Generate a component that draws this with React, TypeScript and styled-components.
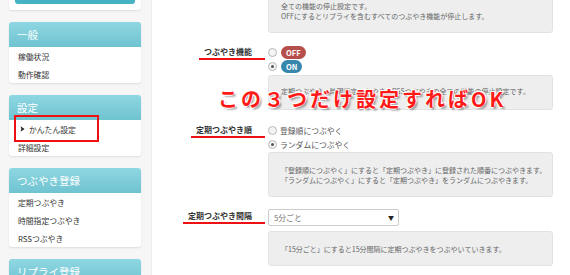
import React from "react";
import styled, { createGlobalStyle, css } from "styled-components";

const GlobalStyle = createGlobalStyle`
  html, body {
    margin: 0;
    padding: 0;
    background: #ffffff;
    font-family: "Noto Sans CJK JP", "Noto Sans", sans-serif;
  }
  #root {
    width: 570px;
    height: 275px;
    overflow: hidden;
  }
`;

const Page = styled.div`
  display: flex;
  width: 570px;
  height: 275px;
  overflow: hidden;
`;

const Sidebar = styled.aside`
  width: 152px;
  flex-shrink: 0;
  background: #f6f6f6;
  border-right: 1px solid #ececec;
  display: flex;
  flex-direction: column;
  gap: 12px;
  padding-left: 9px;
  box-sizing: border-box;
`;

const Card = styled.div`
  width: 132px;
  background: #ffffff;
  border-radius: 3px;
  box-shadow: 0 1px 2px rgba(0, 0, 0, 0.1);
  flex-shrink: 0;
`;

const TopCard = styled(Card)`
  padding: 0 6px 6px;
  box-sizing: border-box;
`;

const TopButton = styled.div`
  height: 4px;
  background: #45b3c4;
  border-radius: 0 0 3px 3px;
`;

const CardHeader = styled.div`
  height: 25px;
  line-height: 25px;
  padding-left: 8px;
  color: #ffffff;
  font-size: 10.5px;
  background: linear-gradient(#8ed7e2, #6fc3d0);
  border-radius: 3px 3px 0 0;
`;

const NavItem = styled.div<{ $active?: boolean }>`
  position: relative;
  display: flex;
  align-items: center;
  height: 18px;
  padding-left: 9px;
  font-size: 7.8px;
  color: #333333;
  ${(p) =>
    p.$active &&
    css`
      &::after {
        content: "";
        position: absolute;
        left: 5px;
        top: -5px;
        width: 85px;
        height: 27px;
        border: 2px solid #ee1111;
        box-sizing: border-box;
      }
    `}
`;

const Chevron = styled.svg`
  width: 5px;
  height: 6px;
  margin: 0 4px 0 2px;
`;

const Main = styled.main`
  position: relative;
  flex: 1;
  padding-right: 16px;
`;

const Section = styled.div<{ $gap: number }>`
  margin-top: ${(p) => p.$gap}px;
  display: grid;
  grid-template-columns: 113px 285px;
  column-gap: 3px;
`;

const Note = styled.div<{ $top: number; $bottom: number; $space?: number }>`
  grid-column: 2;
  margin-top: ${(p) => p.$space ?? 0}px;
  padding: ${(p) => p.$top}px 12px ${(p) => p.$bottom}px;
  background: #eeeeee;
  border: 1px solid #e2e2e2;
  border-radius: 3px;
  color: #666666;
  font-size: 7px;
  line-height: 10px;
  white-space: nowrap;
`;

const LabelCell = styled.div`
  display: flex;
  justify-content: flex-end;
  align-items: flex-start;
`;

const Label = styled.span<{ $offset: number }>`
  margin-top: ${(p) => p.$offset}px;
  height: 12px;
  line-height: 12px;
  padding: 0 13px 0 5px;
  border-bottom: 2px solid #ee1111;
  font-size: 8px;
  font-weight: bold;
  color: #333333;
  white-space: nowrap;
`;

const Options = styled.div`
  display: flex;
  flex-direction: column;
`;

const Option = styled.label`
  display: flex;
  align-items: center;
  height: 14px;
  gap: 3px;
  font-size: 7.8px;
  color: #555555;
`;

const Radio = styled.span<{ $checked?: boolean }>`
  width: 7px;
  height: 7px;
  border-radius: 50%;
  border: 1px solid #b8b8b8;
  background: #f4f4f4;
  position: relative;
  ${(p) =>
    p.$checked &&
    css`
      &::after {
        content: "";
        position: absolute;
        left: 2px;
        top: 2px;
        width: 3px;
        height: 3px;
        border-radius: 50%;
        background: #555555;
      }
    `}
`;

const Badge = styled.span<{ $tone: "on" | "off" }>`
  margin-left: 1px;
  height: 13px;
  line-height: 13px;
  padding: 0 5px;
  border-radius: 7px;
  font-size: 7.5px;
  font-weight: bold;
  color: #ffffff;
  background: ${(p) => (p.$tone === "off" ? "#b54f4b" : "#3787ad")};
`;

const Select = styled.div`
  width: 131px;
  height: 17px;
  box-sizing: border-box;
  border: 1px solid #cccccc;
  border-radius: 2px;
  display: flex;
  align-items: center;
  justify-content: space-between;
  padding: 0 4px 0 5px;
  font-size: 7.8px;
  color: #777777;
  background: #ffffff;
`;

const Arrow = styled.span`
  font-size: 6px;
  color: #222222;
`;

const Annotation = styled.div`
  position: absolute;
  left: 66px;
  top: 86px;
  font-size: 20px;
  line-height: 26px;
  letter-spacing: 3px;
  font-weight: bold;
  color: #ff1a1a;
  white-space: nowrap;
  text-shadow: -1px -1px 0 #fff, 1px -1px 0 #fff, -1px 1px 0 #fff,
    2px 2px 2px rgba(0, 0, 0, 0.35);
`;

export default function App() {
  return (
    <>
      <GlobalStyle />
      <Page>
        <Sidebar>
          <TopCard>
            <TopButton />
          </TopCard>
          <Card>
            <CardHeader>一般</CardHeader>
            <NavItem>稼働状況</NavItem>
            <NavItem>動作確認</NavItem>
          </Card>
          <Card>
            <CardHeader>設定</CardHeader>
            <NavItem $active>
              <Chevron viewBox="0 0 5 6">
                <path d="M0.5 0.3 L4.6 3 L0.5 5.7 L1.4 3 Z" fill="#222" />
              </Chevron>
              かんたん設定
            </NavItem>
            <NavItem>詳細設定</NavItem>
          </Card>
          <Card>
            <CardHeader>つぶやき登録</CardHeader>
            <NavItem>定期つぶやき</NavItem>
            <NavItem>時間指定つぶやき</NavItem>
            <NavItem>RSSつぶやき</NavItem>
          </Card>
          <Card>
            <CardHeader>リプライ登録</CardHeader>
          </Card>
        </Sidebar>
        <Main>
          <Section $gap={0}>
            <Note $top={12} $bottom={11} $space={-12}>
              全ての機能の停止設定です。
              <br />
              OFFにするとリプライを含むすべてのつぶやき機能が停止します。
            </Note>
          </Section>
          <Section $gap={12}>
            <LabelCell>
              <Label $offset={1}>つぶやき機能</Label>
            </LabelCell>
            <Options>
              <Option>
                <Radio />
                <Badge $tone="off">OFF</Badge>
              </Option>
              <Option>
                <Radio $checked />
                <Badge $tone="on">ON</Badge>
              </Option>
            </Options>
            <Note $top={10} $bottom={13} $space={2}>
              定期つぶやき、時間指定つぶやき、RSSつぶやきの全ての機能の停止設定です。
            </Note>
          </Section>
          <Section $gap={13}>
            <LabelCell>
              <Label $offset={1}>定期つぶやき順</Label>
            </LabelCell>
            <Options>
              <Option>
                <Radio />
                登録順につぶやく
              </Option>
              <Option>
                <Radio $checked />
                ランダムにつぶやく
              </Option>
            </Options>
            <Note $top={12} $bottom={11} $space={1}>
              「登録順につぶやく」にすると「定期つぶやき」に登録された順番につぶやきます。
              <br />
              「ランダムにつぶやく」にすると「定期つぶやき」をランダムにつぶやきます。
            </Note>
          </Section>
          <Section $gap={12}>
            <LabelCell>
              <Label $offset={1}>定期つぶやき間隔</Label>
            </LabelCell>
            <Select>
              <span>5分ごと</span>
              <Arrow>▼</Arrow>
            </Select>
            <Note $top={12} $bottom={11} $space={5}>
              「15分ごと」にすると15分間隔に定期つぶやきをつぶやいていきます。
            </Note>
          </Section>
          <Annotation>この３つだけ設定すればOK</Annotation>
        </Main>
      </Page>
    </>
  );
}
